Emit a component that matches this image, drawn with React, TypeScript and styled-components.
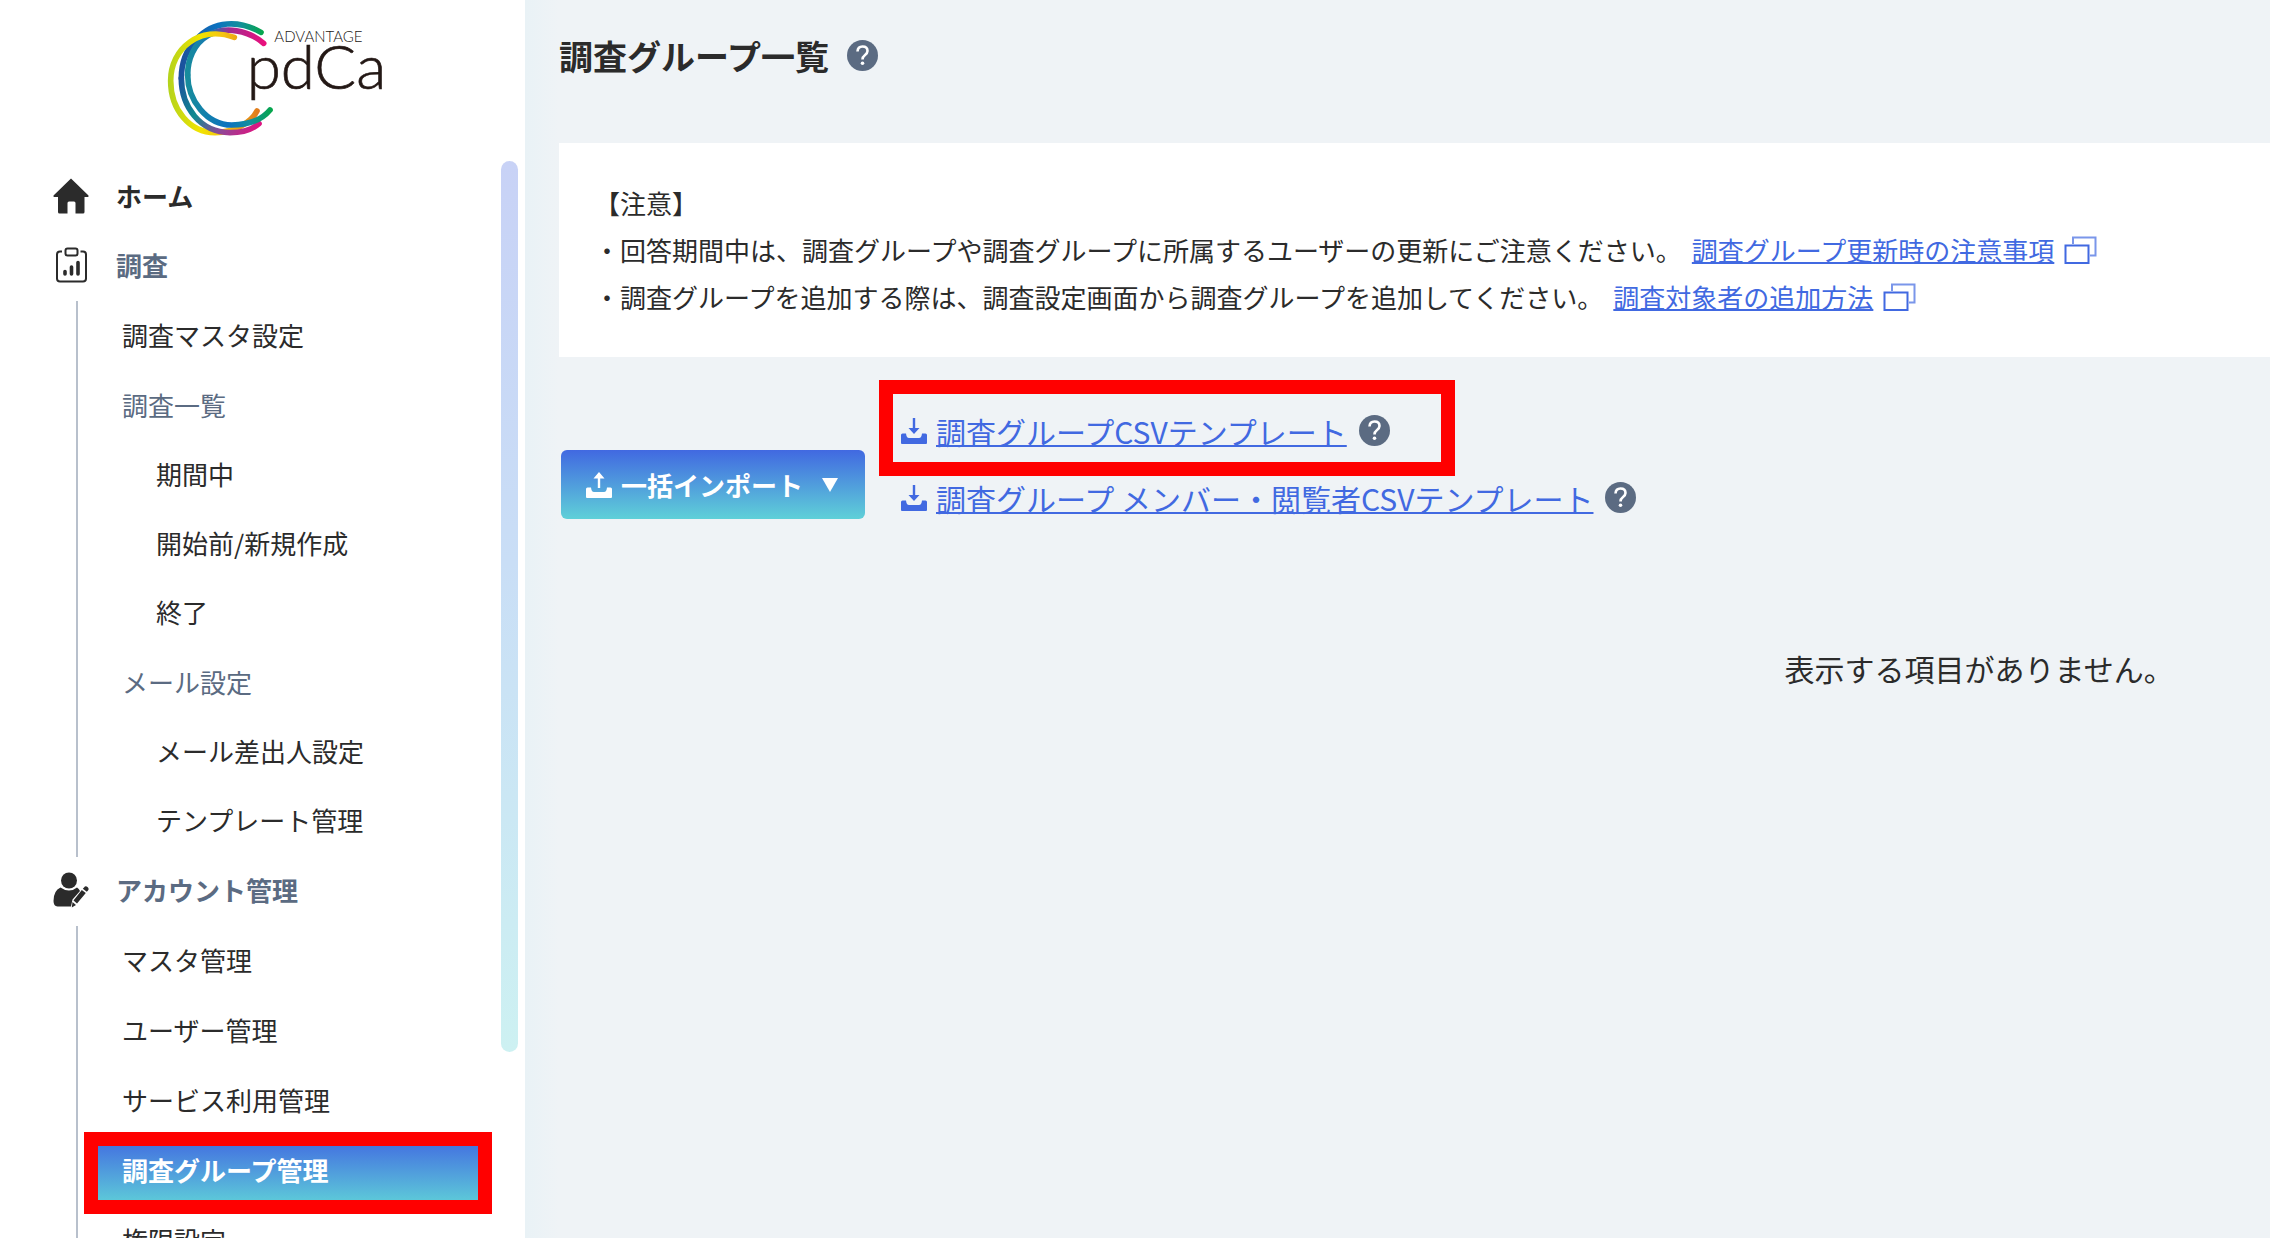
import React from 'react';
import styled, { createGlobalStyle, css } from 'styled-components';

const color = {
  ink: '#2b2b2b',
  slate: '#5b6b82',
  link: '#4169e1',
  page: '#eff3f6',
  mark: '#ff0000',
};

const GlobalStyle = createGlobalStyle`
  *, *::before, *::after { box-sizing: border-box; }
  body {
    margin: 0;
    overflow: hidden;
    background: ${color.page};
    color: ${color.ink};
    font-family: "Noto Sans CJK JP", "Noto Sans", sans-serif;
    font-size: 26px;
  }
  ul { list-style: none; margin: 0; padding: 0; }
  a { color: inherit; text-decoration: none; }
  button { font: inherit; border: 0; padding: 0; cursor: pointer; }
  svg { display: block; flex: none; }
`;

const Page = styled.div`
  display: grid;
  grid-template-columns: 525px minmax(0, 1fr);
  height: 100vh;
`;

/* ---------- sidebar ---------- */

const Sidebar = styled.aside`
  display: flex;
  flex-direction: column;
  min-height: 0;
  background: #fff;
`;

const LogoLink = styled.a`
  flex: none;
  height: 161px;
  padding-left: 140px;
`;

const SidebarBody = styled.div`
  display: flex;
  flex: 1;
  min-height: 0;
  padding-right: 7px;
`;

const Nav = styled.nav`
  flex: 1;
  overflow: hidden;
  padding: 2px 9px 0 0;
`;

const ScrollThumb = styled.div`
  width: 17px;
  height: 72vh;
  border-radius: 9px;
  background: linear-gradient(#c8d2f6, #c9def6 45%, #cdf1f2);
`;

const navRow = css`
  display: flex;
  align-items: center;
  height: 69px;
  padding-bottom: 4px;
`;

const SectionLink = styled.a<{ $muted?: boolean }>`
  ${navRow}
  gap: 27px;
  padding-left: 53px;
  font-weight: 700;
  color: ${(p) => (p.$muted ? color.slate : color.ink)};
`;

const SubList = styled.ul`
  display: flex;
  flex-direction: column;
  gap: 1px;
  margin-left: 76px;
  padding: 1px 0 1px 6px;
  border-left: 2px solid #b8c0cc;
`;

const ItemLink = styled.a<{ $nested?: boolean; $muted?: boolean; $active?: boolean }>`
  ${navRow}
  padding-left: ${(p) => (p.$nested ? 72 : 38)}px;
  color: ${(p) => (p.$muted ? color.slate : color.ink)};
  ${(p) =>
    p.$active &&
    css`
      position: relative;
      color: #fff;
      font-weight: 700;
      background: linear-gradient(${color.link}, #5fd0d8);
      &::after {
        content: '';
        position: absolute;
        inset: -5px 0 -8px;
        border: 14px solid ${color.mark};
      }
    `}
`;

/* ---------- main ---------- */

const Main = styled.main`
  min-width: 0;
  overflow: hidden;
  padding-left: 34px;
  background: linear-gradient(to right, #e9f2f6, ${color.page} 34px);
`;

const TitleBar = styled.header`
  display: flex;
  align-items: center;
  gap: 18px;
  height: 143px;
  padding-bottom: 32px;
`;

const Title = styled.h1`
  margin: 0;
  font-size: 34px;
  line-height: 50px;
  font-weight: 700;
`;

const HelpButton = styled.button`
  width: 31px;
  height: 31px;
  background: none;
`;

const Notice = styled.section`
  padding: 36px 35px 37px;
  background: #fff;
`;

const NoticeLine = styled.p`
  display: flex;
  align-items: center;
  gap: 10px;
  margin: 0;
  line-height: 47px;
  white-space: nowrap;
`;

const NoticeLink = styled.a`
  display: flex;
  align-items: center;
  gap: 10px;
  color: ${color.link};
`;

const Underlined = styled.span`
  text-decoration: underline;
  text-decoration-thickness: 2px;
  text-decoration-skip-ink: none;
`;

const Toolbar = styled.div`
  display: flex;
  align-items: flex-end;
  gap: 36px;
  padding: 40px 0 0 2px;
`;

const ImportButton = styled.button`
  display: flex;
  align-items: center;
  gap: 9px;
  width: 304px;
  height: 69px;
  margin-bottom: 12px;
  padding: 0 25px;
  border-radius: 6px;
  background: linear-gradient(${color.link}, #5fd0d8);
  color: #fff;
  font-weight: 700;
  white-space: nowrap;
`;

const Caret = styled.span`
  width: 0;
  height: 0;
  margin-left: 10px;
  border: 8px solid transparent;
  border-top: 14px solid #fff;
  border-bottom: 0;
`;

const Template = styled.li<{ $marked?: boolean }>`
  position: relative;
  display: flex;
  align-items: center;
  gap: 12px;
  height: 67px;
  ${(p) =>
    p.$marked &&
    css`
      &::after {
        content: '';
        position: absolute;
        inset: -17px auto -12px -22px;
        width: 576px;
        border: 14px solid ${color.mark};
        pointer-events: none;
      }
    `}
`;

const TemplateLink = styled.a`
  display: flex;
  align-items: center;
  gap: 9px;
  color: ${color.link};
  font-size: 30px;
  line-height: 44px;
  white-space: nowrap;
`;

/* The result list is wider than the viewport, its message sits at its centre. */
const ResultList = styled.section`
  width: 166%;
  padding-top: 115px;
  text-align: center;
  font-size: 30px;
  line-height: 45px;
`;

/* ---------- drawings ---------- */

const Logo = () => (
  <svg width="270" height="160" viewBox="0 0 810 480" role="img" aria-label="ADVANTAGE pdCa">
    <defs>
      <linearGradient id="lime" gradientUnits="userSpaceOnUse" x1="85" y1="0" x2="355" y2="0">
        <stop offset="0" stopColor="#b4d31c" />
        <stop offset=".35" stopColor="#f1e400" />
        <stop offset=".6" stopColor="#f5c410" />
        <stop offset="1" stopColor="#e07a1c" />
      </linearGradient>
      <linearGradient id="blueTop" gradientUnits="userSpaceOnUse" x1="122" y1="0" x2="368" y2="0">
        <stop offset="0" stopColor="#1b519c" />
        <stop offset=".45" stopColor="#0c72c0" />
        <stop offset=".72" stopColor="#128f9c" />
        <stop offset="1" stopColor="#06a64c" />
      </linearGradient>
      <linearGradient id="blueBottom" gradientUnits="userSpaceOnUse" x1="122" y1="230" x2="360" y2="390">
        <stop offset="0" stopColor="#1b519c" />
        <stop offset=".35" stopColor="#0f8a90" />
        <stop offset=".65" stopColor="#8a4a98" />
        <stop offset="1" stopColor="#e4107f" />
      </linearGradient>
      <linearGradient id="pinkTop" gradientUnits="userSpaceOnUse" x1="140" y1="0" x2="375" y2="0">
        <stop offset="0" stopColor="#178c9c" />
        <stop offset=".3" stopColor="#1678b4" />
        <stop offset=".55" stopColor="#a32a90" />
        <stop offset="1" stopColor="#ea0f7c" />
      </linearGradient>
      <linearGradient id="tealBottom" gradientUnits="userSpaceOnUse" x1="140" y1="0" x2="395" y2="0">
        <stop offset="0" stopColor="#178c9c" />
        <stop offset=".5" stopColor="#0c72c0" />
        <stop offset=".75" stopColor="#128f9c" />
        <stop offset="1" stopColor="#06a64c" />
      </linearGradient>
    </defs>
    <g fill="none" strokeWidth="17" strokeLinecap="round">
      <path stroke="url(#blueTop)" d="M363 97C300 60 220 60 169 118C136 152 124 190 124 235" />
      <path stroke="url(#pinkTop)" d="M371 130C325 90 255 78 205 106C160 132 143 180 143 225" />
      <path stroke="url(#lime)" d="M283 112C180 75 92 145 92 242C92 330 150 398 225 398C285 398 335 365 351 333" />
      <path stroke="url(#blueBottom)" d="M124 235C124 320 180 397 270 398C305 398 335 390 357 371" />
      <path stroke="url(#tealBottom)" d="M143 225C143 300 200 375 275 375C325 375 365 360 390 330" />
    </g>
    <g fill="#231815" fontFamily="Lato, sans-serif" fontWeight="300">
      <text x="403" y="127" fontSize="45">ADVANTAGE</text>
      <text x="320" y="266" fontSize="186" stroke="#231815" strokeWidth="2">pdCa</text>
    </g>
  </svg>
);

const HomeIcon = () => (
  <svg width="36" height="36" viewBox="0 0 36 36" fill={color.ink} aria-hidden="true">
    <path d="M18 0.500L35.500 17.500Q36 19 34.500 19H31.500V34Q31.500 35.500 30 35.500H22.500V25Q22.500 23.500 21 23.500H16Q14.500 23.500 14.500 25V35.500H6.500Q5 35.500 5 34V19H1.500Q0 19 0.500 17.500Z" />
  </svg>
);

const SurveyIcon = () => (
  <svg width="36" height="36" viewBox="0 0 36 36" fill="none" stroke={color.ink} strokeWidth="2" aria-hidden="true">
    <path d="M9 4.500H7Q4 4.500 4 7.500V31.500Q4 34.500 7 34.500H30Q33 34.500 33 31.500V7.500Q33 4.500 30 4.500H27.500" />
    <rect x="12.500" y="1.500" width="12" height="7" rx="2" />
    <path strokeWidth="3.600" strokeLinecap="round" d="M12 24.500V27M18.500 20V27M25 15.500V27" />
  </svg>
);

const AccountIcon = () => (
  <svg width="36" height="36" viewBox="0 0 36 36" fill={color.ink} aria-hidden="true">
    <circle cx="16" cy="8.500" r="8" />
    <path d="M7.500 15.500Q11.500 18.500 16 18.500Q20.500 18.500 24 15.500Q26 16.500 27 19L19.500 27.500L18 34.500H4.500Q0.500 34 0.500 29Q0.500 18.500 7.500 15.500Z" />
    <path d="M31 15.500Q32.500 13.500 34.500 15Q36.500 16.800 35 18.500L33.800 19.800L29.800 16.800ZM28.800 18L32.800 21L24 31.500L20.500 28.500ZM19.500 30L23 33L18.800 35.500Z" />
  </svg>
);

const HelpIcon = () => (
  <svg width="31" height="31" viewBox="0 0 31 31" aria-hidden="true">
    <circle cx="15.500" cy="15.500" r="15.500" fill={color.slate} />
    <path
      d="M10.500 11.500Q10.800 6.500 15.500 6.500Q20.500 6.500 20.500 11Q20.500 13.300 17.800 15.200Q15.500 16.800 15.500 19.500"
      fill="none"
      stroke="#fff"
      strokeWidth="2.600"
    />
    <circle cx="15.500" cy="23.300" r="1.800" fill="#fff" />
  </svg>
);

const NewWindowIcon = () => (
  <svg width="33" height="28" viewBox="0 0 33 28" fill="none" stroke={color.link} strokeWidth="2" aria-hidden="true">
    <path opacity=".7" d="M9 8V1.500H31.500V19.500H26" />
    <path d="M1.500 9.500H24.500V27H1.500Z" />
  </svg>
);

const Tray = 'M0 17Q0 15.500 1.500 15.500H5Q5.500 20 8 20H18Q20.500 20 21 15.500H24.500Q26 15.500 26 17V25Q26 26 25 26H1Q0 26 0 25Z';

const UploadIcon = () => (
  <svg width="26" height="26" viewBox="0 0 26 26" fill="currentColor" aria-hidden="true">
    <path d={Tray} />
    <path d="M13 0L18.500 6.500H14.200V16H11.800V6.500H7.500Z" />
  </svg>
);

const DownloadIcon = () => (
  <svg width="26" height="26" viewBox="0 0 26 26" fill="currentColor" aria-hidden="true">
    <path d={Tray} />
    <path d="M11.800 0H14.200V10H18.500L13 16L7.500 10H11.800Z" />
  </svg>
);

/* ---------- content ---------- */

type Group = { title?: string; items: string[] };

const surveyGroups: Group[] = [
  { items: ['調査マスタ設定'] },
  { title: '調査一覧', items: ['期間中', '開始前/新規作成', '終了'] },
  { title: 'メール設定', items: ['メール差出人設定', 'テンプレート管理'] },
];

const accountItems = ['マスタ管理', 'ユーザー管理', 'サービス利用管理', '調査グループ管理', '権限設定'];
const currentItem = '調査グループ管理';

const notices = [
  {
    text: '・回答期間中は、調査グループや調査グループに所属するユーザーの更新にご注意ください。',
    link: '調査グループ更新時の注意事項',
  },
  {
    text: '・調査グループを追加する際は、調査設定画面から調査グループを追加してください。',
    link: '調査対象者の追加方法',
  },
];

const templates = [
  { name: '調査グループCSVテンプレート', marked: true },
  { name: '調査グループ メンバー・閲覧者CSVテンプレート', marked: false },
];

const Help = () => (
  <HelpButton type="button" aria-label="ヘルプ">
    <HelpIcon />
  </HelpButton>
);

export default function App() {
  return (
    <Page>
      <GlobalStyle />
      <Sidebar>
        <LogoLink href="#">
          <Logo />
        </LogoLink>
        <SidebarBody>
          <Nav>
            <SectionLink href="#">
              <HomeIcon />
              ホーム
            </SectionLink>
            <SectionLink href="#" $muted>
              <SurveyIcon />
              調査
            </SectionLink>
            <SubList>
              {surveyGroups.map((group, i) => (
                <li key={i}>
                  {group.title && (
                    <ItemLink href="#" $muted>
                      {group.title}
                    </ItemLink>
                  )}
                  {group.items.map((item) => (
                    <ItemLink href="#" key={item} $nested={Boolean(group.title)}>
                      {item}
                    </ItemLink>
                  ))}
                </li>
              ))}
            </SubList>
            <SectionLink href="#" $muted>
              <AccountIcon />
              アカウント管理
            </SectionLink>
            <SubList>
              {accountItems.map((item) => (
                <li key={item}>
                  <ItemLink href="#" $active={item === currentItem}>
                    {item}
                  </ItemLink>
                </li>
              ))}
            </SubList>
          </Nav>
          <ScrollThumb />
        </SidebarBody>
      </Sidebar>
      <Main>
        <TitleBar>
          <Title>調査グループ一覧</Title>
          <Help />
        </TitleBar>
        <Notice>
          <NoticeLine>【注意】</NoticeLine>
          {notices.map((notice) => (
            <NoticeLine key={notice.link}>
              {notice.text}
              <NoticeLink href="#">
                <Underlined>{notice.link}</Underlined>
                <NewWindowIcon />
              </NoticeLink>
            </NoticeLine>
          ))}
        </Notice>
        <Toolbar>
          <ImportButton type="button">
            <UploadIcon />
            一括インポート
            <Caret />
          </ImportButton>
          <ul>
            {templates.map((template) => (
              <Template key={template.name} $marked={template.marked}>
                <TemplateLink href="#">
                  <DownloadIcon />
                  <Underlined>{template.name}</Underlined>
                </TemplateLink>
                <Help />
              </Template>
            ))}
          </ul>
        </Toolbar>
        <ResultList>表示する項目がありません。</ResultList>
      </Main>
    </Page>
  );
}
